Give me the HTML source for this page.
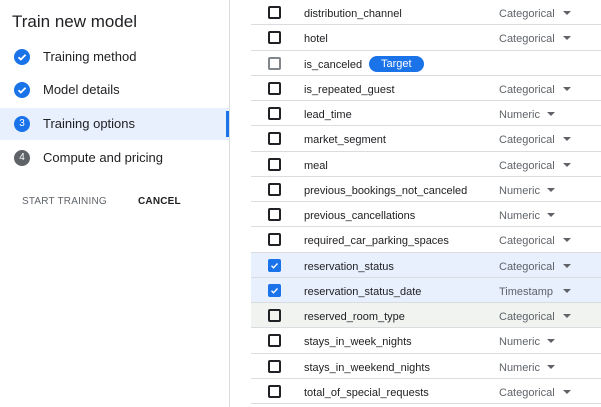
<!DOCTYPE html>
<html><head><style>
*{margin:0;padding:0;box-sizing:border-box}
body{width:601px;height:407px;overflow:hidden;background:#fff;font-family:"Liberation Sans",Arial,sans-serif;position:relative;color:#202124}
.left{position:absolute;left:0;top:0;width:230px;height:407px;border-right:1px solid #dadce0}
h1{position:absolute;left:12px;top:12px;font-size:17px;font-weight:normal;color:#202124}
.step{position:absolute;left:0;width:229px;height:32px;font-size:13px;line-height:32px}
.step .c{position:absolute;left:14px;top:8px;width:16px;height:16px;border-radius:50%;background:#1a73e8;color:#fff;font-size:10px;line-height:16px;text-align:center}
.step .t{position:absolute;left:43px}
.sel{background:#e8f0fe}
.bar{position:absolute;left:226px;top:111px;width:3px;height:26px;background:#1a73e8}
.btn{position:absolute;top:196px;font-size:10px;letter-spacing:0.2px}
.row{position:absolute;left:251px;width:350px;height:25.25px;border-bottom:1px solid #dadce0;font-size:11px}
.row .cb{position:absolute;left:17px;top:6px;width:13px;height:13px;border:2px solid #202124;border-radius:2px}
.row .cb.on{background:#1a73e8;border-color:#1a73e8}
.row .n{position:absolute;left:53px;top:8px;color:#202124}
.row .ty{position:absolute;left:248px;top:8px;color:#5f6368}
.arr{position:absolute;top:11px;width:0;height:0;border-left:4px solid transparent;border-right:4px solid transparent;border-top:4px solid #5f6368}
.tag{position:absolute;left:118px;top:5px;background:#1a73e8;color:#fff;border-radius:9px;padding:2px 12px;font-size:11px}
</style></head><body>
<div class="left">
<h1>Train new model</h1>
<div class="step" style="top:41px"><div class="c"><svg width="16" height="16" viewBox="0 0 16 16"><path d="M4.5 8.2l2.3 2.3 4.8-4.8" stroke="#fff" stroke-width="1.8" fill="none"/></svg></div><span class="t">Training method</span></div>
<div class="step" style="top:74px"><div class="c"><svg width="16" height="16" viewBox="0 0 16 16"><path d="M4.5 8.2l2.3 2.3 4.8-4.8" stroke="#fff" stroke-width="1.8" fill="none"/></svg></div><span class="t">Model details</span></div>
<div class="step sel" style="top:108px"><div class="c">3</div><span class="t">Training options</span></div>
<div class="step" style="top:142px"><div class="c" style="background:#5f6368">4</div><span class="t">Compute and pricing</span></div>
<div class="bar"></div>
<div class="btn" style="left:22px;color:#5f6368">START TRAINING</div>
<div class="btn" style="left:138px;color:#202124;font-weight:bold">CANCEL</div>
</div>

<div class="row" style="top:0px"><div class="cb"></div><span class="n">distribution_channel</span><span class="ty">Categorical</span><div class="arr" style="left:312px"></div></div>
<div class="row" style="top:25.25px"><div class="cb"></div><span class="n">hotel</span><span class="ty">Categorical</span><div class="arr" style="left:312px"></div></div>
<div class="row" style="top:50.5px"><div class="cb" style="border-color:#80868b"></div><span class="n">is_canceled</span><span class="tag">Target</span></div>
<div class="row" style="top:75.75px"><div class="cb"></div><span class="n">is_repeated_guest</span><span class="ty">Categorical</span><div class="arr" style="left:312px"></div></div>
<div class="row" style="top:101px"><div class="cb"></div><span class="n">lead_time</span><span class="ty">Numeric</span><div class="arr" style="left:296px"></div></div>
<div class="row" style="top:126.25px"><div class="cb"></div><span class="n">market_segment</span><span class="ty">Categorical</span><div class="arr" style="left:312px"></div></div>
<div class="row" style="top:151.5px"><div class="cb"></div><span class="n">meal</span><span class="ty">Categorical</span><div class="arr" style="left:312px"></div></div>
<div class="row" style="top:176.75px"><div class="cb"></div><span class="n">previous_bookings_not_canceled</span><span class="ty">Numeric</span><div class="arr" style="left:296px"></div></div>
<div class="row" style="top:202px"><div class="cb"></div><span class="n">previous_cancellations</span><span class="ty">Numeric</span><div class="arr" style="left:296px"></div></div>
<div class="row" style="top:227.25px"><div class="cb"></div><span class="n">required_car_parking_spaces</span><span class="ty">Categorical</span><div class="arr" style="left:312px"></div></div>
<div class="row" style="top:252.5px;background:#e8f0fe"><div class="cb on"><svg width="9" height="9" viewBox="0 0 9 9" style="position:absolute;left:0;top:0"><path d="M1.5 4.8l2 2 4-4.3" stroke="#fff" stroke-width="1.4" fill="none"/></svg></div><span class="n">reservation_status</span><span class="ty">Categorical</span><div class="arr" style="left:312px"></div></div>
<div class="row" style="top:277.75px;background:#e8f0fe"><div class="cb on"><svg width="9" height="9" viewBox="0 0 9 9" style="position:absolute;left:0;top:0"><path d="M1.5 4.8l2 2 4-4.3" stroke="#fff" stroke-width="1.4" fill="none"/></svg></div><span class="n">reservation_status_date</span><span class="ty">Timestamp</span><div class="arr" style="left:312px"></div></div>
<div class="row" style="top:303px;background:#f1f3f1"><div class="cb"></div><span class="n">reserved_room_type</span><span class="ty">Categorical</span><div class="arr" style="left:312px"></div></div>
<div class="row" style="top:328.25px"><div class="cb"></div><span class="n">stays_in_week_nights</span><span class="ty">Numeric</span><div class="arr" style="left:296px"></div></div>
<div class="row" style="top:353.5px"><div class="cb"></div><span class="n">stays_in_weekend_nights</span><span class="ty">Numeric</span><div class="arr" style="left:296px"></div></div>
<div class="row" style="top:378.75px"><div class="cb"></div><span class="n">total_of_special_requests</span><span class="ty">Categorical</span><div class="arr" style="left:312px"></div></div>
</body></html>
